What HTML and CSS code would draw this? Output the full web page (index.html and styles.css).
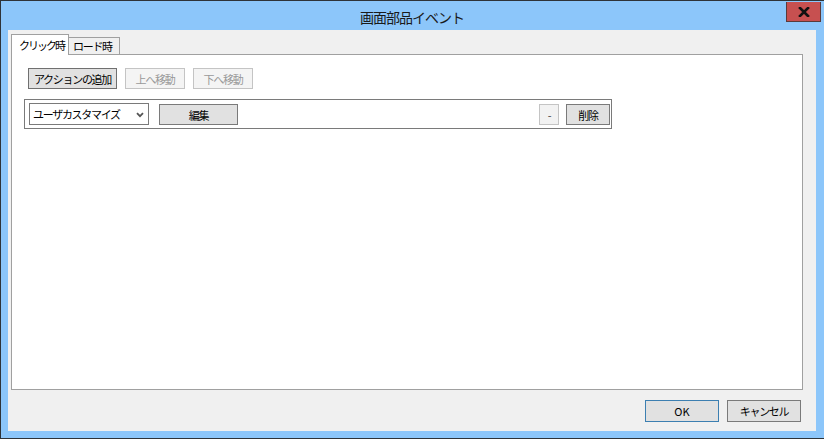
FILE: index.html
```html
<!DOCTYPE html>
<html>
<head>
  <title>画面部品イベント</title>
  <link rel="stylesheet" href="styles.css">
</head>
<body>
  <div class="window">
    <div class="titlebar">
      <span class="title">画面部品イベント</span>
      <button class="close-btn" type="button">
        <svg width="12" height="10" viewBox="0 0 12 10"><path d="M2 1 L10 9 M10 1 L2 9" stroke="#111" stroke-width="2.6" stroke-linecap="square"/></svg>
      </button>
    </div>

    <div class="client">
      <div class="tabs">
        <div class="tab active">クリック時</div>
        <div class="tab">ロード時</div>
      </div>

      <div class="tab-panel">
        <div class="toolbar">
          <button class="btn btn-action" type="button">アクションの追加</button>
          <button class="btn btn-move" type="button" disabled>上へ移動</button>
          <button class="btn btn-move" type="button" disabled>下へ移動</button>
        </div>

        <div class="action-row">
          <div class="combo">
            <span>ユーザカスタマイズ</span>
            <svg class="chevron" width="8" height="6" viewBox="0 0 8 6"><path d="M1 1.2 L4 4.2 L7 1.2" stroke="#555" stroke-width="1.8" fill="none"/></svg>
          </div>
          <button class="btn btn-edit" type="button">編集</button>
          <div class="spacer"></div>
          <button class="btn btn-minus" type="button">-</button>
          <button class="btn btn-delete" type="button">削除</button>
        </div>
      </div>

      <div class="footer">
        <button class="btn btn-ok" type="button">OK</button>
        <button class="btn btn-cancel" type="button">キャンセル</button>
      </div>
    </div>
  </div>
</body>
</html>
```

FILE: styles.css
```css
html, body {
  margin: 0;
  padding: 0;
}

body {
  font-family: 'Noto Sans CJK JP', 'Noto Sans', sans-serif;
  font-size: 11px;
  letter-spacing: -1.3px;
  color: #000;
  background: #fff;
  white-space: nowrap;
}

.window {
  width: 824px;
  height: 439px;
  box-sizing: border-box;
  background: #8cc6fa;
  border-top: 1px solid #2e3338;
  border-left: 1px solid #2e3338;
  border-bottom: 1px solid #2e3338;
  display: flex;
  flex-direction: column;
}

.titlebar {
  position: relative;
  height: 29px;
  display: flex;
  align-items: center;
  justify-content: center;
  padding-right: 1px;
}

.title {
  font-size: 14px;
  letter-spacing: -1px;
  color: #1a1a1a;
  margin-top: 2px;
}

.close-btn {
  position: absolute;
  top: 1px;
  right: 3px;
  width: 35px;
  height: 20px;
  padding: 0;
  margin: 0;
  background: #c75050;
  border: 1px solid #5b3a3a;
  border-top: none;
  display: flex;
  align-items: center;
  justify-content: center;
}

.client {
  height: 401px;
  margin: 0 8px 0 7px;
  background: #f0f0f0;
  box-sizing: border-box;
  padding: 4px 13px 0 3px;
  display: flex;
  flex-direction: column;
}

.tabs {
  display: flex;
  align-items: flex-end;
  height: 20px;
  position: relative;
  z-index: 1;
}

.tab {
  height: 17px;
  box-sizing: border-box;
  border: 1px solid #a0a0a0;
  border-bottom: none;
  background: #f0f0f0;
  padding: 0 0 0 4px;
  line-height: 16px;
  width: 51px;
}

.tab.active {
  height: 21px;
  width: 58px;
  background: #fff;
  margin-bottom: -1px;
  padding: 2px 0 0 7px;
  line-height: 16px;
  letter-spacing: -2px;
}

.tab + .tab {
  border-left: none;
}

.tab-panel {
  height: 336px;
  box-sizing: border-box;
  border: 1px solid #a0a0a0;
  background: #fff;
  padding: 13px 0 0 12px;
}

.toolbar {
  display: flex;
  gap: 8px;
  padding-left: 4px;
}

.btn {
  font-family: inherit;
  font-size: 11px;
  letter-spacing: -1.3px;
  color: #000;
  height: 21px;
  padding: 0;
  margin: 0;
  box-sizing: border-box;
  background: #e1e1e1;
  border: 1px solid #7a7a7a;
  line-height: 18px;
  white-space: nowrap;
}

.btn-action {
  width: 89px;
  border-color: #707070;
}

.btn-move {
  width: 60px;
  background: #f4f4f4;
  border-color: #c4c4c4;
  color: #999;
}

.action-row {
  margin-top: 10px;
  width: 588px;
  height: 30px;
  box-sizing: border-box;
  border: 1px solid #7a7a7a;
  display: flex;
  align-items: center;
  padding: 0 1px 0 4px;
}

.combo {
  width: 120px;
  height: 22px;
  box-sizing: border-box;
  border: 1px solid #7a7a7a;
  background: #fff;
  display: flex;
  align-items: center;
  justify-content: space-between;
  padding: 0 4px 0 3px;
  line-height: 20px;
}

.chevron {
  margin-top: 1px;
}

.btn-edit {
  width: 79px;
  margin-left: 10px;
  margin-top: 1px;
}

.spacer {
  flex: 1;
}

.btn-minus {
  width: 20px;
  background: #f2f2f2;
  border-color: #c4c4c4;
  color: #444;
  margin-top: 1px;
}

.btn-delete {
  width: 44px;
  margin-left: 7px;
  margin-top: 1px;
}

.footer {
  display: flex;
  justify-content: flex-end;
  gap: 8px;
  margin-top: 10px;
  padding-right: 2px;
}

.btn-ok,
.btn-cancel {
  width: 74px;
  height: 22px;
  line-height: 19px;
}

.btn-ok {
  border-color: #3c7fb1;
  letter-spacing: 0;
}
```
